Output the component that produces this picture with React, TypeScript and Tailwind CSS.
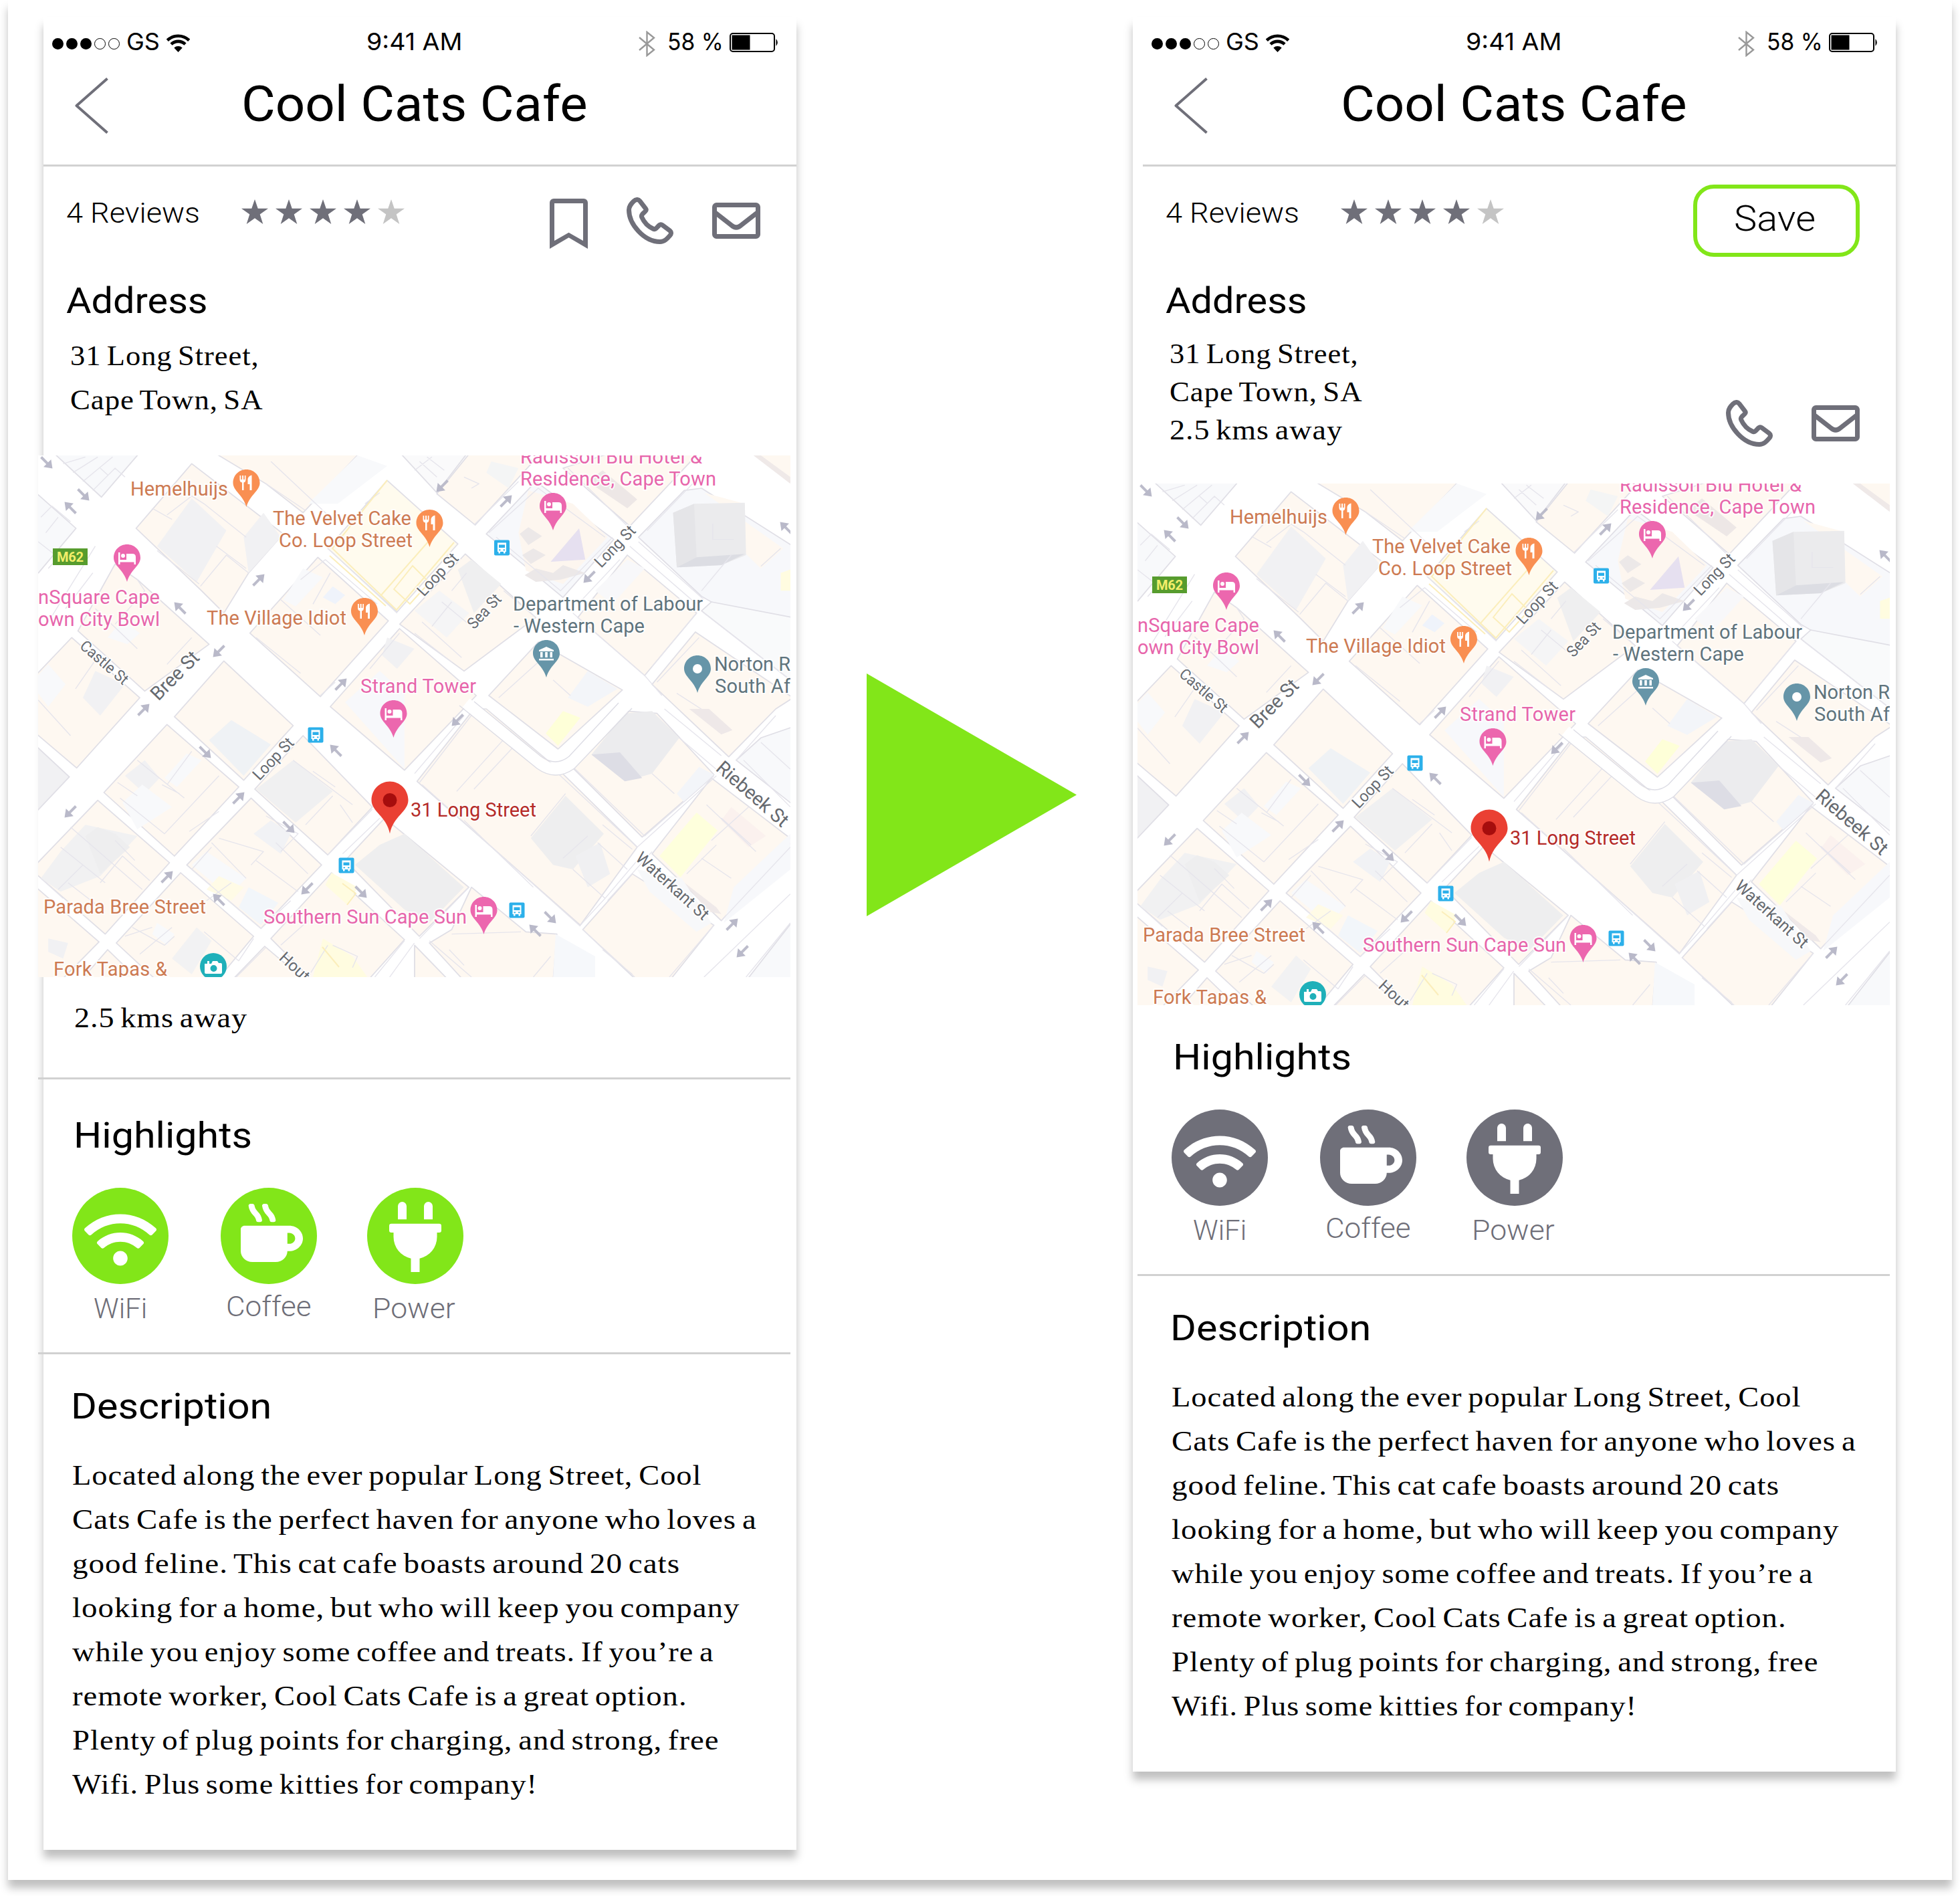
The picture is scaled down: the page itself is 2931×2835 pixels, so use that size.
import { useLayoutEffect, useRef, useState, type ReactNode } from "react";
import { FaMugHot, FaPlug, FaWifi } from "react-icons/fa";

const SANS = "font-['Roboto','Liberation_Sans',sans-serif]";
const SERIF = "font-['Liberation_Serif',serif] tracking-[0.9px] [word-spacing:-3.5px]";
const SYSTEM = "font-['Inter','Liberation_Sans',sans-serif]";

/** One line of text, stretched so that it fills the given width. */
function Line({ w, className = "", children }: { w: number; className?: string; children: string }) {
  const ref = useRef<HTMLSpanElement>(null);
  const [scale, setScale] = useState(1);
  useLayoutEffect(() => {
    if (ref.current) setScale(w / ref.current.offsetWidth);
  }, [w, children]);
  return (
    <div className={`whitespace-nowrap ${className}`}>
      <div style={{ width: w }}>
        <span ref={ref} className="inline-block origin-left align-top" style={{ transform: `scaleX(${scale})` }}>
          {children}
        </span>
      </div>
    </div>
  );
}

/* ---------- icons ---------- */

function Bookmark() {
  return (
    <svg className="h-[75px] w-[57px]" viewBox="0 0 57 75" fill="#6f6f79" fillRule="evenodd">
      <path d="M6 0H51a6 6 0 0 1 6 6V75L28.5 58.3 0 75V6a6 6 0 0 1 6-6ZM7 7V63L28.5 50.7 50 63V7Z" />
    </svg>
  );
}

function Phone() {
  return (
    <svg className="h-[70px] w-[70px]" viewBox="0 0 70 70" fill="none" stroke="#6f6f79" strokeWidth="7">
      <path d="M3.5 19C3.5 13 7 9.500 10.500 6C13.500 3 17.500 2.500 19.700 5.500L28.300 16.500C29.600 18.300 29.300 19.800 28 21L23.700 25.100C22.300 26.500 22 28 22.800 29.800C26 37 32 43.500 39.500 47C41.500 48 43 47.700 44.300 46.300L48.500 42C50 40.500 52 40.300 53.500 41.500L64.500 49.700C67 51.800 67.200 54.500 65 57C61 61.500 57 66.500 50 66.500C26 66.500 3.500 40 3.500 19Z" />
    </svg>
  );
}

function Mail() {
  return (
    <svg className="h-[54px] w-[72px]" viewBox="0 0 72 54" fill="none" stroke="#6f6f79" strokeWidth="7">
      <rect x="3.5" y="3.5" width="65" height="47" rx="3" />
      <path d="M4 14.500L29 34Q36 40 43 34L68 14.500" />
    </svg>
  );
}

function Star({ on }: { on: boolean }) {
  return (
    <svg className="h-[37px] w-10" viewBox="0 0 40 37" fill={on ? "#6f6f79" : "#c4c4c4"}>
      <path d="M20 0L24.700 13.700H40L27.700 22.500L32.300 37L20 28.200L7.700 37L12.300 22.500L0 13.700H15.300Z" />
    </svg>
  );
}

function StatusBar() {
  return (
    <div className={`flex h-[72px] w-[1126px] items-center pl-[13px] text-[36px] leading-[44px] text-black ${SYSTEM}`}>
      <div className="mt-[6px] flex gap-[4px]">
        {[0, 1, 2, 3, 4].map((i) => (
          <div
            key={i}
            className={
              i < 3 ? "h-[17px] w-[17px] rounded-full bg-black" : "h-[17px] w-[17px] rounded-full border-[1.5px] border-black"
            }
          />
        ))}
      </div>
      <Line w={50} className="ml-[10px]">GS</Line>
      <svg className="mt-[5px] ml-[10px] h-[27px] w-[35px]" viewBox="0 0 35 27" fill="none" stroke="#000" strokeWidth="4.600">
        <path d="M1.300 9.300A23.500 23.500 0 0 1 33.700 9.300" />
        <path d="M7 15.200A15 15 0 0 1 28 15.200" />
        <path d="M17.500 27L11.300 20.500A9 9 0 0 1 23.700 20.500Z" fill="#000" stroke="none" />
      </svg>
      <Line w={143} className="ml-[264px]">9:41 AM</Line>
      <svg className="mt-[6px] ml-[264px] h-[39px] w-[25px]" viewBox="0 0 25 39" fill="none" stroke="#999" strokeWidth="2.400">
        <path d="M1 10L23 28.500L12.500 37V2L23 10.500L1 29" />
      </svg>
      <Line w={84} className="ml-[18px]">58 %</Line>
      <svg className="mt-[3px] ml-[9px] h-[29px] w-[74px]" viewBox="0 0 74 29">
        <rect x="1" y="1" width="66" height="27" rx="4" fill="none" stroke="#000" strokeWidth="2" />
        <rect x="3.500" y="3.500" width="27" height="22" fill="#000" />
        <path d="M69.500 9Q74 14.500 69.500 20Z" fill="#000" />
      </svg>
    </div>
  );
}

/* ---------- map ---------- */

type Poly = [points: string, fill: string];
const C = "#fef8f1";
const G = "#f1f1f3";
const L = "#f8f9fb";
const Y = "#fffce0";

// The map is drawn in four quarters, each with its own grid of coordinates.
const QUARTERS: { at: string; blocks: Poly[]; parts: Poly[]; lines: string }[] = [
  {
    at: "translate(-7 -11) scale(0.3699 0.33333)",
    blocks: [
      ["80,20 275,220 430,20", L],
      ["0,190 172,360 20,560 0,560", L],
      ["640,70 1010,385 870,560 770,740 675,635 415,360", C],
      ["730,20 1320,20 1090,290 940,160", C],
      ["1430,145 1716,430 1470,735 1190,450", "#fffbee"],
      ["1150,490 1435,775 1160,1115 875,830", C],
      ["330,520 420,590 710,880 450,1090 180,820 240,700", C],
      ["155,850 430,1120 175,1435 0,1270 0,1030", C],
      ["770,955 1050,1245 850,1490 570,1205", C],
      ["1480,810 1790,1110 1500,1445 1200,1160", C],
    ],
    parts: [
      ["500,440 640,225 780,370 660,600", G],
      ["850,400 930,290 1000,400 870,560", G],
      ["1310,33 1430,80 1230,250 1110,250", L],
      ["1430,850 1540,900 1470,990 1410,930", G],
      ["1090,540 1170,580 1060,710 1010,680", L],
      ["1210,620 1260,660 1220,700 1170,670", "#eff3fb"],
      ["250,1000 370,1060 270,1200 200,1120", G],
      ["60,970 130,1060 60,1160 19,1100 19,1020", L],
      ["710,1310 800,1220 960,1330 850,1470", "#eff2f5"],
      ["360,770 430,830 380,880 300,850", L],
      ["1260,1140 1400,1000 1500,1100 1500,1440", "#f7f8fb"],
    ],
    lines:
      "M120 70L210 40M160 110L260 40M200 150L320 40M240 190L330 90L370 130M270 90L300 120M30 310L75 260L150 330M50 380L100 310M19 420L100 490L60 540M540 300L640 215L690 250M690 250L860 400M500 460L670 610M675 620L780 480L870 560M740 440L860 540M480 270L560 320M940 160L1100 280M960 60L1190 300M1190 450L1470 740M1340 250L1400 200M1080 590L1180 500L1390 700M1000 680L1160 840M1130 700L1200 560M900 850L1080 1010M1160 1110L1220 1050M1360 990L1480 830M250 720L420 900M420 590L450 640L330 790M540 970L640 850M170 1080L270 920M19 1130L150 1290M240 560L130 720M250 440L60 780",
  },
  {
    at: "translate(563 -11) scale(0.3699 0.33333)",
    blocks: [
      ["-60,20 215,20 90,200", "#fafafb"],
      ["90,205 225,20 430,20 480,60 245,345", C],
      ["490,150 805,410 600,670 290,385", "#f7f8fb"],
      ["600,90 800,20 1150,20 870,350", C],
      ["905,400 1090,190 1160,180 1530,440 1530,900 1160,665", "#f7f8fb"],
      ["1160,730 1530,1050 1530,760 1200,690", "#f9fafb"],
      ["205,475 490,760 200,1000 -60,790", C],
      ["860,480 1140,740 930,1020 660,760", C],
      ["500,870 840,1085 580,1350 300,1110", C],
      ["1135,825 1530,1120 1460,1170 1270,1385 960,1060", C],
      ["1370,20 1530,20 1530,160", C],
    ],
    parts: [
      ["460,190 640,250 780,400 600,610 450,550 420,380", "#fdf6ef"],
      ["550,510 665,360 690,500", "#e6e0f0"],
      ["425,385 460,355 515,395 460,435", "#ece8e8"],
      ["435,480 480,450 530,480 470,520", "#ece8e8"],
      ["445,570 490,540 560,560 600,525 690,560 590,590 490,600", "#ece8e8"],
      ["1170,200 1490,450 1400,540 1335,470 1335,250", C],
      ["1045,290 1130,250 1335,245 1340,480 1240,525 1060,535", "#ebebed"],
      ["1045,290 1130,250 1140,490 1060,535", "#e5e5e8"],
      ["1060,535 1140,490 1335,475 1240,525", "#dcdde3"],
      ["175,545 230,500 350,610 240,740", "#efeff0"],
      ["0,730 100,640 220,740 130,850", "#f5f5f6"],
      ["700,150 760,100 900,230 860,270", "#ede7e6"],
      ["1480,560 1530,540 1530,640 1480,640", Y],
      ["700,1000 820,1080 700,1160 620,1120", "#f3f5f9"],
      ["1400,33 1519,130 1519,160 1370,33", "#efe9e8"],
      ["310,60 420,90 380,180 290,110", "#f4f5f5"],
      ["860,500 930,540 800,700 730,640", "#f8f8fa"],
    ],
    lines:
      "M20 60L90 130M50 40L120 100M0 100L70 40M240 345L420 150M300 380L500 180L770 400M330 400L590 640L800 400M620 90L860 350M870 440L1140 700M905 420L1170 680M940 370L1150 130M660 700L830 500M1205 340V410H1290M1160 640L1280 480M1400 530L1480 450M1140 740L960 980M1170 740L1519 1040M640 740L930 1020L1000 1110M980 1050L1150 850M340 1120L560 900M560 1040L630 1110M0 830L150 960M30 780L190 940M70 800L150 690M110 690L230 800M150 640L210 560M360 640L490 760M200 130L260 160L230 180M1060 1100L1200 1200",
  },
  {
    at: "translate(-7 379) scale(0.3699 0.33333)",
    blocks: [
      ["540,70 830,350 570,660 285,375", C],
      ["260,410 550,690 290,1010 0,730 0,710", C],
      ["880,400 1165,700 920,985 620,700", C],
      ["1090,120 1370,440 1190,655 895,360", C],
      ["595,735 890,1020 740,1220 500,1220 335,1050", C],
      ["0,790 265,1045 110,1220 0,1220", C],
      ["300,1080 430,1220 190,1220", C],
      ["1205,735 1500,1035 1350,1220 1130,1220 960,1030", C],
      ["1420,490 1760,800 1560,1020 1260,680", C],
      ["935,1065 1100,1220 800,1220", C],
      ["0,155 145,305 0,475", G],
    ],
    parts: [
      ["450,230 510,310 450,380 370,300", G],
      ["620,200 680,230 580,350 530,310", L],
      ["360,420 440,340 560,440 420,540", L],
      ["210,520 420,570 270,750 110,820 30,760 110,640", "#f1f1f2"],
      ["210,570 260,530 330,560 390,620 270,740", "#eeeeef"],
      ["1050,230 1210,370 1060,510 900,360", "#f0f0f1"],
      ["960,500 1040,560 1000,650 890,560", "#f1f2f5"],
      ["640,700 700,640 860,760 790,840", L],
      ["870,800 990,870 920,970 830,890", "#f2f6fa"],
      ["750,750 850,800 800,860 700,810", "#fffbe6"],
      ["1205,735 1310,800 1270,880 1180,790", Y],
      ["1170,1030 1290,1110 1350,1203 1130,1203", Y],
      ["1400,610 1500,560 1740,800 1600,960 1500,900 1300,700", "#eeeeef"],
      ["660,980 720,1040 640,1190 560,1120", "#f2f2f3"],
      ["60,1030 140,1050 120,1120 60,1090", G],
      ["500,960 570,1010 540,1060 480,1010", L],
    ],
    lines:
      "M420 230L610 400M520 340L590 380M540 340L640 190M350 400L530 560L750 300M630 550L750 460M340 330L420 390M110 620L290 780M150 530L440 810M100 810L200 700M270 780L360 660L470 770M330 590L410 680M30 760L120 850M720 600L860 760M750 580L930 640L880 700M640 720L720 620M700 860L800 780M900 680L1070 820M980 600L1110 740M940 480L1070 560L1000 640M1050 230L1290 430M1130 280L1220 350M1100 520L1210 390M1240 430L1290 510M1250 650L1400 490M1190 655L1370 450M370 1020L480 980M400 980L530 1060L570 1020M430 1100L560 980M690 1000L830 1130L890 1030M1000 1060L1110 950M1190 1060L1110 1203M1210 1060L1310 1110L1290 1160M1440 1203L1540 1050M1380 1203L1500 1040M820 1203L940 1070M140 780L280 900M640 720L920 985L1040 860",
  },
  {
    at: "translate(563 379) scale(0.3699 0.33333)",
    blocks: [
      ["240,0 290,0 580,270 900,620 670,970 10,325", C],
      ["860,10 980,20 1210,295 920,575 640,265", C],
      ["1530,80 1400,130 1300,230 1530,430", L],
      ["1200,310 1530,590 1240,950 960,650", C],
      ["880,740 1210,970 1030,1220 900,1220 680,990", C],
      ["60,1050 150,990 230,800 450,1000 575,1010 560,1220 200,1220", C],
      ["1530,950 1340,1220 1530,1220", L],
      ["0,1060 140,1220 0,1220", C],
    ],
    parts: [
      ["610,390 765,560 640,720 560,700 470,580", "#eeeeef"],
      ["650,660 750,600 790,740 700,800", "#f0f0f2"],
      ["850,20 960,10 1070,130 960,290 850,325 715,205", "#ececee"],
      ["715,205 830,195 920,310 850,325", "#dddde5"],
      ["530,110 600,10 670,40 580,165", "#feffd8"],
      ["1140,465 1225,545 1075,755 990,660", "#feffdc"],
      ["1110,0 1190,0 1285,95 1240,115", "#eee8e8"],
      ["1150,260 1210,295 1090,420 1060,380", "#f3f5f9"],
      ["1080,770 1220,890 1240,920 1190,910", "#efe9e9"],
      ["900,720 1080,760 1200,960 1140,1000 950,820", "#f7f8fa"],
      ["570,1010 730,1110 730,1203 560,1203", "#f6f8fb"],
      ["1280,440 1420,570 1350,620 1240,500", "#fbf1ee"],
      ["1290,800 1519,560 1519,720 1250,960", "#f7f8fb"],
    ],
    lines:
      "M20 330L250 0M0 290L200 30M170 370L390 100M240 360L400 170M640 260L930 570L1210 300M580 290L900 620L1220 300M620 240L780 60M960 290L1050 380M760 520L880 630M740 600L860 720M470 570L610 380M600 670L700 570M640 720L770 850L900 680M780 860L960 640M670 970L770 850M30 340L670 975M200 500L480 800M1180 430L1380 640M1240 490L1360 610M1160 670L1280 760M1100 740L1220 610M1200 590L1350 440M1240 950L1519 620M680 990L890 1203M760 1080L880 1190M1030 1203L1210 970M1170 1203L1519 830M1340 1203L1519 960M1300 230L1460 30M1330 230L1519 440M1400 150L1519 270M1070 130L1240 290M60 1040L230 1203M150 1010L430 1000M20 1030L220 800M140 1080L200 1150M480 1203L550 1110M1010 0L1240 210",
  },
];

const ARROWS: [number, number, number][] = [
  [13, 11, 45], [68, 59, 45], [48, 78, 225], [330, 186, -45], [212, 228, 225], [270, 293, 135], [453, 342, -45], [158, 380, -45],
  [604, 46, 135], [700, 68, -45], [824, 182, 135], [1118, 108, 225],
  [250, 444, 45], [445, 441, 225], [48, 533, 135], [300, 512, -45], [375, 556, 45], [193, 630, -45], [402, 648, 135], [270, 664, 225], [483, 653, 45],
  [627, 396, 135], [766, 691, 45], [743, 710, 225], [1038, 701, -45], [1053, 742, 135],
];

const ORANGE = "#f98f52";
const PINK = "#ec67ae";
const SLATE = "#6695a8";

const LABELS: [text: string, x: number, y: number, w: number, fill: string][] = [
  ["Hemelhuijs", 138, 60, 146, "#cd7a52"],
  ["The Velvet Cake", 351, 104, 207, "#cd7a52"],
  ["Co. Loop Street", 360, 137, 200, "#cd7a52"],
  ["nSquare Cape", 0, 222, 182, "#e765ab"],
  ["own City Bowl", 0, 255, 182, "#e765ab"],
  ["The Village Idiot", 252, 253, 209, "#cd7a52"],
  ["Strand Tower", 482, 355, 173, "#e765ab"],
  ["Radisson Blu Hotel &", 721, 12, 272, "#e765ab"],
  ["Residence, Cape Town", 721, 45, 293, "#e765ab"],
  ["Department of Labour", 710, 232, 284, "#5f747d"],
  ["- Western Cape", 711, 265, 196, "#5f747d"],
  ["Norton R", 1011, 322, 114, "#5f747d"],
  ["South Af", 1012, 355, 113, "#5f747d"],
  ["31 Long Street", 557, 540, 188, "#b52b28"],
  ["Parada Bree Street", 8, 685, 243, "#cd7a52"],
  ["Fork Tapas &", 23, 778, 170, "#cd7a52"],
  ["Southern Sun Cape Sun", 337, 700, 304, "#e765ab"],
];

// Street names run from one baseline point to another.
const STREETS: [text: string, x1: number, y1: number, x2: number, y2: number, size: number][] = [
  ["Castle St", 61, 287, 127, 344, 23],
  ["Bree St", 180, 368, 243, 304, 29],
  ["Loop St", 577, 212, 630, 155, 24],
  ["Sea St", 652, 261, 694, 216, 24],
  ["Long St", 842, 169, 895, 114, 24],
  ["Loop St", 331, 487, 384, 431, 24],
  ["Hout St", 359, 753, 418, 807, 24],
  ["Riebeek St", 1012, 470, 1112, 557, 29],
  ["Waterkant St", 892, 604, 994, 696, 25],
];

type Glyph = "food" | "bed" | "bank" | "dot";
const PINS: [x: number, y: number, fill: string, glyph: Glyph][] = [
  [311.5, 21, ORANGE, "food"],
  [585.5, 81, ORANGE, "food"],
  [488, 213, ORANGE, "food"],
  [133, 133, PINK, "bed"],
  [770, 56, PINK, "bed"],
  [531.5, 366, PINK, "bed"],
  [666.5, 660, PINK, "bed"],
  [760, 276, SLATE, "bank"],
  [986, 299, SLATE, "dot"],
];
const PIN = "M0 0C11 0 20 8.500 20 20C20 32 5 38 0 56C-5 38 -20 32 -20 20C-20 8.500 -11 0 0 0Z";
const GLYPHS: Record<Glyph, ReactNode> = {
  food: (
    <>
      <path d="M-10 9V15Q-10 19 -6.500 19.500V31H-4V19.500Q-1 19 -1 15V9H-2.700V15H-4.400V9H-6.400V15H-8.200V9Z" />
      <path d="M8 8.500V31H5V22H2V14Q3 9.500 8 8.500Z" />
    </>
  ),
  bed: <path d="M-13 12H-10.500V23H-1V14H8Q13 14 13 19V30H10.500V26.500H-10.500V30H-13ZM-9 17a3 3 0 1 1 6 0a3 3 0 1 1-6 0Z" />,
  bank: <path d="M0 10L11 15V17H-11V15ZM-9 18H-5.500V26H-9ZM-1.800 18H1.800V26H-1.800ZM5.500 18H9V26H5.500ZM-11 28H11V30.500H-11Z" />,
  dot: <circle cx="0" cy="20" r="7" />,
};

function StreetMap() {
  return (
    <svg className="ml-[-8px] block h-[780px] w-[1125px] bg-white" viewBox="0 0 1125 780">
      {QUARTERS.map((q) => (
        <g key={q.at} transform={q.at} strokeLinejoin="round">
          {q.blocks.map(([points, fill], i) => (
            <polygon key={i} points={points} fill={fill} stroke="#e0dfe6" strokeWidth="5" />
          ))}
          {q.parts.map(([points, fill], i) => (
            <polygon key={i} points={points} fill={fill} />
          ))}
          <path d={q.lines} fill="none" stroke="#e6e5ec" strokeWidth="4" />
        </g>
      ))}
      <g fill="none" stroke="#fbeebb" strokeWidth="2">
        <path d="M522 37L440 139L536 231L622 130M532 200L560 165L585 190L556 222ZM512 210L600 110M436 150L520 225" />
        <path d="M425 735L450 765M455 640L475 655L462 672" />
      </g>
      <path d="M640 370L750 460Q774 478 798 460L880 372" fill="none" stroke="#fff" strokeWidth="17" />
      <path d="M652 368L752 450Q774 466 794 450L868 370M630 374L746 468Q774 488 802 468L888 378" fill="none" stroke="#dddde5" strokeWidth="1.500" />

      {ARROWS.map(([x, y, a], i) => (
        <path key={i} d="M-12 0H4" transform={`translate(${x} ${y}) rotate(${a})`} stroke="#bcbccb" strokeWidth="4" />
      ))}
      {ARROWS.map(([x, y, a], i) => (
        <path key={i} d="M1 -8L12 0L1 8Z" transform={`translate(${x} ${y}) rotate(${a})`} fill="#b9b9c9" />
      ))}

      <g fontFamily="Roboto, 'Liberation Sans', sans-serif" fontSize="29" stroke="#fff" strokeWidth="4" paintOrder="stroke" strokeOpacity="0.8">
        {STREETS.map(([text, x1, y1, x2, y2, size], i) => (
          <text
            key={i}
            fontSize={size}
            fill="#666a70"
            textLength={Math.hypot(x2 - x1, y2 - y1)}
            lengthAdjust="spacingAndGlyphs"
            transform={`translate(${x1} ${y1}) rotate(${(Math.atan2(y2 - y1, x2 - x1) * 180) / Math.PI})`}
          >
            {text}
          </text>
        ))}
        {LABELS.map(([text, x, y, w, fill]) => (
          <text key={text} x={x} y={y} fill={fill} textLength={w}>
            {text}
          </text>
        ))}
      </g>

      <rect x="22" y="139" width="52" height="25" fill="#579c2e" />
      <text x="28" y="159" fontFamily="Roboto, sans-serif" fontWeight="700" fontSize="20" textLength="40" fill="#f3ee6a">
        M62
      </text>

      {[[693.5, 138], [415, 418], [461, 613], [716, 680]].map(([x, y]) => (
        <g key={x} transform={`translate(${x} ${y})`}>
          <rect x="-11.500" y="-11.500" width="23" height="23" rx="2" fill="#2cb0ea" />
          <path d="M-6.500 -7.500H6.500V6H5V8.500H2.500V6H-2.500V8.500H-5V6H-6.500Z" fill="#fff" />
          <path d="M-4.500 -4.500H4.500V0H-4.500ZM-4.500 2.500h2.500v1.800h-2.500ZM2 2.500h2.500v1.800H2Z" fill="#2cb0ea" />
        </g>
      ))}

      {PINS.map(([x, y, fill, glyph], i) => (
        <g key={i} transform={`translate(${x} ${y})`}>
          <path d={PIN} fill={fill} />
          <g fill="#fff" fillRule="evenodd">{GLYPHS[glyph]}</g>
        </g>
      ))}

      <g transform="translate(526 487.500)">
        <path d="M0 0C15 0 27.500 12 27.500 28C27.500 45 5 52 0 78C-5 52 -27.500 45 -27.500 28C-27.500 12 -15 0 0 0Z" fill="#ea4033" />
        <circle cy="28" r="10.500" fill="#a60d0d" />
      </g>

      <g transform="translate(262 764)">
        <circle r="20" fill="#1fb0b9" />
        <path
          d="M-13 -4H-9V-8H-6V-4H-3L-1 -8H6L8 -5H11Q13 -5 13 -3V9Q13 11 11 11H-11Q-13 11 -13 9ZM-4.500 3a5 5 0 1 0 10 0a5 5 0 1 0-10 0Z"
          fill="#fff"
          fillRule="evenodd"
        />
      </g>
    </svg>
  );
}

/* ---------- screen ---------- */

function Rule() {
  return <div className="ml-[-8px] h-[3px] w-[1125px] bg-[#d1d1d1]" />;
}

function Heading({ w, className, children }: { w: number; className: string; children: string }) {
  return (
    <Line w={w} className={`h-[60px] text-[53px] leading-[60px] text-black ${SANS} ${className}`}>
      {children}
    </Line>
  );
}

const DESCRIPTION: [string, number][] = [
  ["Located along the ever popular Long Street, Cool", 941],
  ["Cats Cafe is the perfect haven for anyone who loves a", 1024],
  ["good feline. This cat cafe boasts around 20 cats", 909],
  ["looking for a home, but who will keep you company", 998],
  ["while you enjoy some coffee and treats. If you’re a", 960],
  ["remote worker, Cool Cats Cafe is a great option.", 920],
  ["Plenty of plug points for charging, and strong, free", 968],
  ["Wifi. Plus some kitties for company!", 696],
];

function Highlights({ active }: { active: boolean }) {
  const disc = `flex h-36 w-36 items-start rounded-full text-white ${active ? "bg-[#82e619]" : "bg-[#6f6f79]"}`;
  const label = `text-[42px] leading-[50px] font-light text-[#6e6e78] ${SANS}`;
  return (
    <div className="mt-[48px] flex h-[206px] pl-[43px]">
      <div className="flex w-36 flex-col items-center">
        <div className={disc}>
          <FaWifi className="mt-[34px] ml-[18px] h-[88px] w-[108px]" preserveAspectRatio="none" />
        </div>
        <Line w={80} className={`mt-[12px] ${label}`}>WiFi</Line>
      </div>
      <div className="ml-[78px] flex w-36 flex-col items-center">
        <div className={disc}>
          <FaMugHot className="mt-[24px] ml-[30px] h-[87px] w-[93px]" preserveAspectRatio="none" />
        </div>
        <Line w={128} className={`mt-[9px] ${label}`}>Coffee</Line>
      </div>
      <div className="ml-[75px] flex w-36 flex-col items-center">
        <div className={disc}>
          <FaPlug className="mt-[21px] ml-[33px] h-[105px] w-[78px]" preserveAspectRatio="none" />
        </div>
        <Line w={124} className={`mt-[12px] mr-[4px] ${label}`}>Power</Line>
      </div>
    </div>
  );
}

function CafeScreen({ updated = false }: { updated?: boolean }) {
  const serif = `text-[42px] text-black ${SERIF}`;
  return (
    <div className="w-[1126px]">
      <StatusBar />
      <div className="flex h-[148px] items-center pb-[33px] pl-[47px]">
        <svg className="mt-[4px] h-[84px] w-[50px]" viewBox="0 0 50 84" fill="none" stroke="#6f6f79" strokeWidth="4" strokeLinejoin="round">
          <path d="M48.500 1.500L2.500 42L48.500 82.500" />
        </svg>
        <Line w={518} className={`ml-[199px] text-[74px] leading-[84px] text-black ${SANS}`}>Cool Cats Cafe</Line>
      </div>
      <div className="h-[3px] w-[1126px] bg-[#d1d1d1]" />

      <div className="flex h-[160px] items-start pr-[54px] pl-[34px]">
        <Line w={200} className={`mt-[45px] w-[197px] text-[42px] leading-[50px] font-light text-black ${SANS}`}>4 Reviews</Line>
        <div className="mt-[49px] ml-[65px] flex gap-[11px]">
          {[0, 1, 2, 3, 4].map((i) => (
            <Star key={i} on={i < 4} />
          ))}
        </div>
        {updated ? (
          <div className={`mt-[27px] ml-auto flex h-[108px] w-[249px] items-center justify-center rounded-[31px] border-[6px] border-[#82e619] pr-[6px] pb-[6px] ${SANS}`}>
            <Line w={122} className="text-[54px] leading-[60px] font-light text-black">Save</Line>
          </div>
        ) : (
          <div className="ml-auto flex gap-[58px]">
            <div className="mt-[48px]"><Bookmark /></div>
            <div className="mt-[46px]"><Phone /></div>
            <div className="mt-[54px]"><Mail /></div>
          </div>
        )}
      </div>

      <Heading w={212} className="mt-[11px] pl-[34px]">Address</Heading>

      {updated ? (
        <div className="mt-[21px] mb-[51px] flex justify-between pr-[54px] pl-[40px]">
          <div className={`leading-[57px] ${serif}`}>
            <Line w={283}>31 Long Street,</Line>
            <Line w={288}>Cape Town, SA</Line>
            <Line w={259}>2.5 kms away</Line>
          </div>
          <div className="flex gap-[58px]">
            <div className="mt-[97px]"><Phone /></div>
            <div className="mt-[105px]"><Mail /></div>
          </div>
        </div>
      ) : (
        <div className={`mt-[19px] mb-[50px] pl-[40px] leading-[66px] ${serif}`}>
          <Line w={283}>31 Long Street,</Line>
          <Line w={288}>Cape Town, SA</Line>
        </div>
      )}

      <StreetMap />

      {updated ? (
        <div className="h-[48px]" />
      ) : (
        <>
          <Line w={259} className={`mt-[28px] mb-[56px] pl-[46px] leading-[66px] ${serif}`}>2.5 kms away</Line>
          <Rule />
          <div className="h-[54px]" />
        </>
      )}

      <Heading w={267} className="pl-[45px]">Highlights</Heading>
      <Highlights active={!updated} />
      <div className="h-[40px]" />
      <Rule />
      <Heading w={300} className="mt-[48px] pl-[41px]">Description</Heading>
      <div className={`mt-[40px] pl-[43px] leading-[66px] ${serif}`}>
        {DESCRIPTION.map(([text, w]) => (
          <Line key={text} w={w}>
            {text}
          </Line>
        ))}
      </div>
    </div>
  );
}

export default function App() {
  return (
    <div className="h-[2835px] w-[2931px] overflow-hidden bg-white pl-3">
      <div className="flex h-[2811px] w-[2907px] items-start bg-white shadow-[0_12px_12px_rgba(0,0,0,0.25)]">
        <div className="mt-[26px] ml-[53px] h-[2740px] w-[1126px] bg-white shadow-[0_12px_12px_rgba(0,0,0,0.25)]">
          <CafeScreen />
        </div>
        <svg className="mt-[1007px] ml-[105px] h-[363px] w-[314px]" viewBox="0 0 314 363">
          <path d="M0 0L314 181.500L0 363Z" fill="#82e619" />
        </svg>
        <div className="mt-[26px] ml-[84px] h-[2623px] w-[1141px] bg-white pl-[15px] shadow-[0_12px_12px_rgba(0,0,0,0.25)]">
          <CafeScreen updated />
        </div>
      </div>
    </div>
  );
}
